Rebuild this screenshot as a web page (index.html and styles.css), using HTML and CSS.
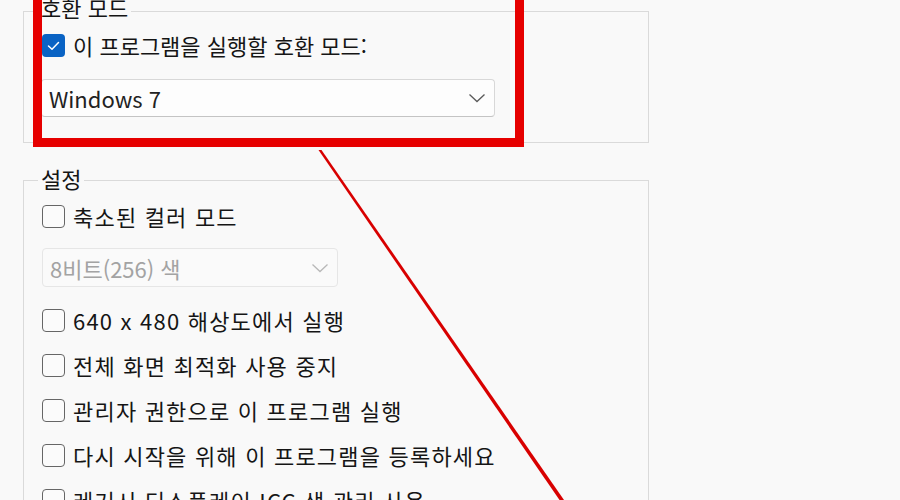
FILE: index.html
```html
<!DOCTYPE html>
<html lang="ko">
<head>
<meta charset="utf-8">
<link rel="stylesheet" href="styles.css">
</head>
<body>
<div class="page">
  <section class="group g1">
    <div class="legend">호환 모드</div>
    <div class="row first">
      <span class="cb checked"><svg width="23" height="23" viewBox="0 0 23 23"><path d="M6.5 12 L10 15.3 L16.5 8.5" fill="none" stroke="#ffffff" stroke-width="1.5" stroke-linecap="round" stroke-linejoin="round"/></svg></span>
      <span class="lbl">이 프로그램을 실행할 호환 모드:</span>
    </div>
    <div class="select s1">
      <span class="val">Windows 7</span>
      <svg class="chev" width="18" height="10" viewBox="0 0 18 10"><path d="M1.5 1.5 L9 8.5 L16.5 1.5" fill="none" stroke="#5a5a5a" stroke-width="1.3"/></svg>
    </div>
  </section>

  <section class="group g2">
    <div class="legend">설정</div>
    <div class="row first"><span class="cb"></span><span class="lbl">축소된 컬러 모드</span></div>
    <div class="select s2 disabled">
      <span class="val">8비트(256) 색</span>
      <svg class="chev" width="18" height="10" viewBox="0 0 18 10"><path d="M1.5 1.5 L9 8.5 L16.5 1.5" fill="none" stroke="#b8b8b8" stroke-width="1.3"/></svg>
    </div>
    <div class="row r640"><span class="cb"></span><span class="lbl">640 x 480 해상도에서 실행</span></div>
    <div class="row"><span class="cb"></span><span class="lbl">전체 화면 최적화 사용 중지</span></div>
    <div class="row"><span class="cb"></span><span class="lbl">관리자 권한으로 이 프로그램 실행</span></div>
    <div class="row"><span class="cb"></span><span class="lbl">다시 시작을 위해 이 프로그램을 등록하세요</span></div>
    <div class="row"><span class="cb"></span><span class="lbl">레거시 디스플레이 ICC 색 관리 사용</span></div>
  </section>

  <div class="annot-rect"></div>
  <svg class="annot-line" width="900" height="500" viewBox="0 0 900 500">
    <polygon points="318.5,150 321.5,150 564,500 559.5,500" fill="#d80000"/>
  </svg>
</div>
</body>
</html>
```

FILE: styles.css
```css
html, body {
  margin: 0;
  padding: 0;
  background: #f9f9f9;
}
body {
  width: 900px;
  height: 500px;
  overflow: hidden;
  font-family: "Noto Sans CJK KR", "Noto Sans", sans-serif;
  font-size: 22px;
  color: #151515;
}
.page {
  position: relative;
  width: 900px;
  height: 500px;
  padding: 11px 0 0 23px;
  box-sizing: border-box;
  overflow: hidden;
}
.group {
  box-sizing: border-box;
  width: 626px;
  border: 1px solid #dadada;
  padding-left: 17px;
}
.g1 {
  padding-bottom: 25px;
}
.g2 {
  margin-top: 37px;
  height: 400px;
}
.legend {
  display: block;
  width: max-content;
  height: 26px;
  line-height: 26px;
  padding: 0 3px;
  margin-left: -3px;
  background: #f9f9f9;
}
.g1 .legend {
  margin-top: -18px;
}
.g2 .legend {
  margin-top: -16px;
}
.row {
  display: flex;
  align-items: center;
  height: 34px;
  margin-top: 11px;
}
.row.first {
  margin-top: 8px;
}
.row.r640 {
  margin-top: 16px;
}
.cb {
  box-sizing: border-box;
  width: 23px;
  height: 23px;
  flex: none;
  border: 1.5px solid #666666;
  border-radius: 4px;
  background: #fbfbfb;
  margin-left: 1px;
  margin-right: 8px;
  display: flex;
  align-items: center;
  justify-content: center;
}
.cb.checked {
  border: none;
  background: #0a63c4;
}
.cb svg {
  display: block;
}
.lbl {
  line-height: 34px;
  white-space: nowrap;
}
.g2 .lbl {
  letter-spacing: 1.2px;
}
.select {
  box-sizing: border-box;
  display: flex;
  align-items: center;
  justify-content: space-between;
  border: 1px solid #d8d8d8;
  border-bottom-color: #c4c4c4;
  border-radius: 4px;
  background: #fdfdfd;
  padding: 0 8px 0 7px;
}
.s1 {
  width: 454px;
  height: 38px;
  margin-top: 17px;
}
.s2 {
  width: 296px;
  height: 39px;
  margin-top: 15px;
  margin-left: 1px;
}
.select.disabled {
  border-color: #e6e6e6;
  background: #fafafa;
  color: #a3a3a3;
}
.val {
  line-height: 36px;
  color: inherit;
}
.s1 .val {
  color: #222;
}
.chev {
  display: block;
  flex: none;
}
.annot-rect {
  position: absolute;
  left: 33px;
  top: -20px;
  width: 491px;
  height: 167px;
  box-sizing: border-box;
  border: 9px solid #e60000;
}
.annot-line {
  position: absolute;
  left: 0;
  top: 0;
  pointer-events: none;
}
```
